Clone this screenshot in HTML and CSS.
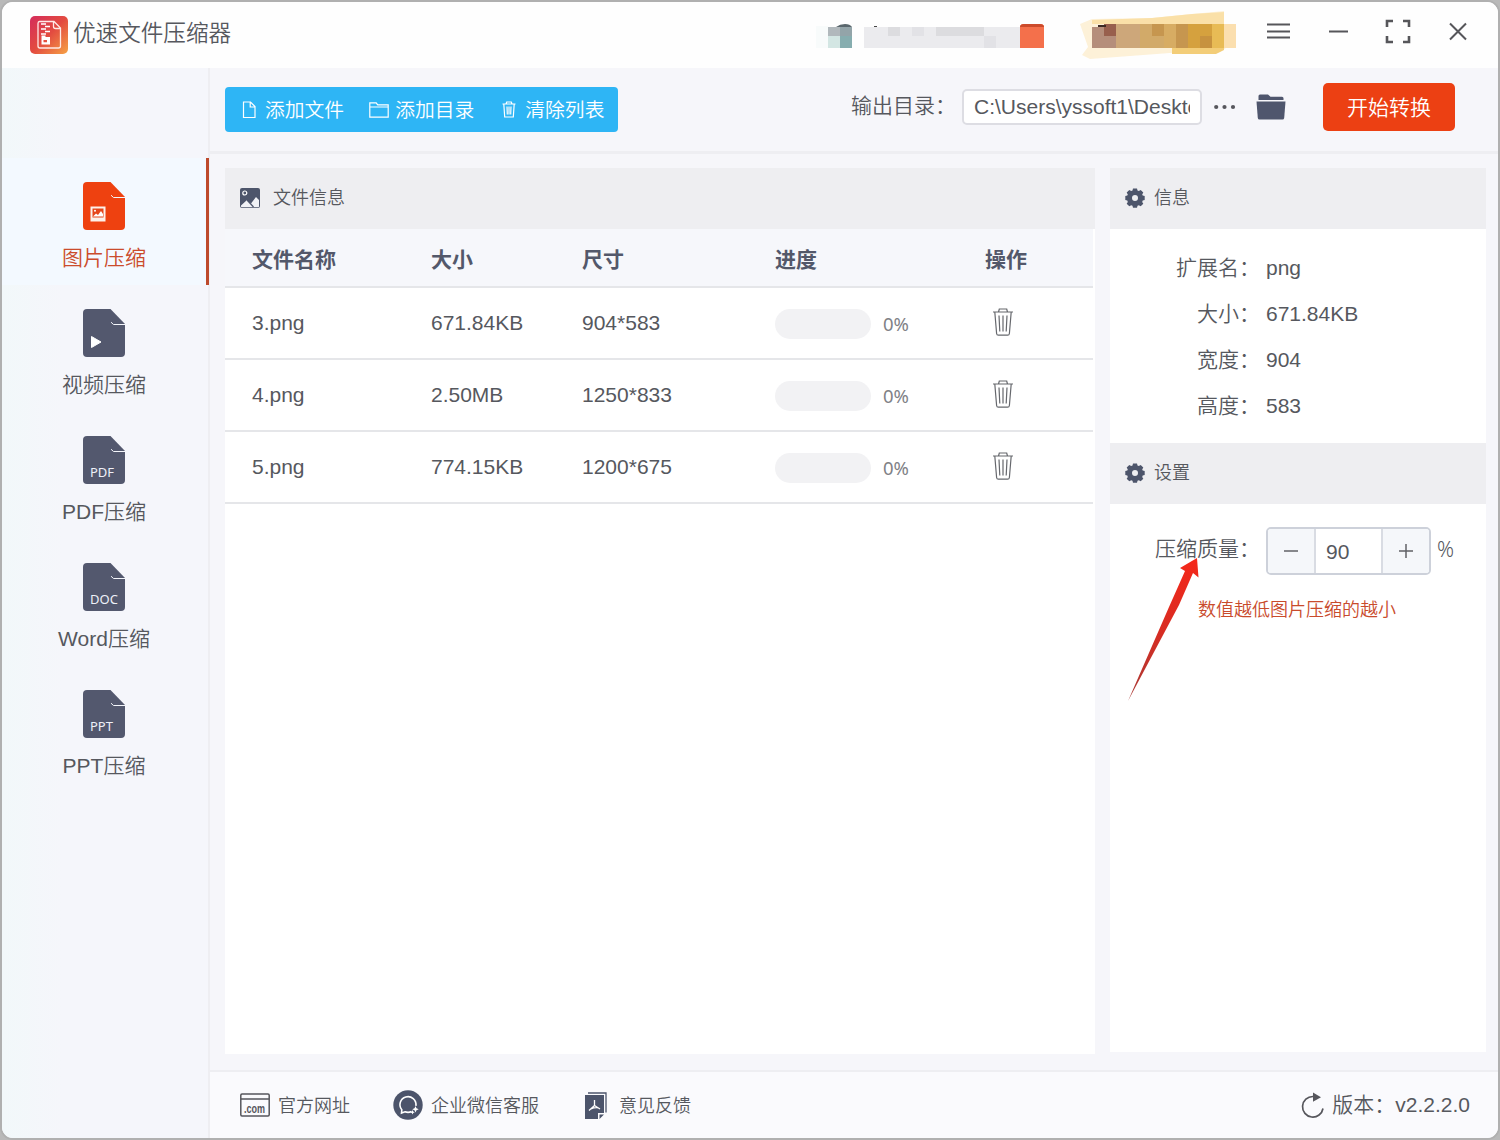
FILE: index.html
```html
<!DOCTYPE html>
<html lang="zh-CN">
<head>
  <meta charset="UTF-8">
  <meta name="viewport" content="width=device-width, initial-scale=1.0">
  <title>优速文件压缩器</title>
  <link rel="stylesheet" href="styles.css">
</head>
<body>
  <!-- Shared icons -->
  <svg class="sprite" width="0" height="0">
    <symbol id="i-file" viewBox="0 0 42 48">
      <path d="M4 0h23.500L42 15V44a4 4 0 0 1-4 4H4a4 4 0 0 1-4-4V4a4 4 0 0 1 4-4z" fill="currentColor"/>
      <path d="M28 13.200l2.500 2.300H42" fill="none" stroke="#f4f6fb" stroke-width="1"/>
    </symbol>
    <symbol id="i-trash" viewBox="0 0 20 28">
      <path d="M0 4h20M5.500 4l.8-3h7.400l.8 3M1.800 4l1.800 21.500q.2 1.700 1.800 1.700h9.200q1.600 0 1.800-1.700L18.200 4" fill="none" stroke="currentColor" stroke-width="1.200"/>
      <path d="M6 7.500l.8 16M10 7.500v16M14 7.500l-.8 16" fill="none" stroke="currentColor" stroke-width="1.200"/>
    </symbol>
    <symbol id="i-gear" viewBox="0 0 20 20">
      <path fill="currentColor" fill-rule="evenodd" d="M7.500 2.500L8 .5h4l.5 2 1.300.6L15.700 2l2.600 2.600-1.100 1.800.5 1.200 2 .5v4l-2 .5-.5 1.300 1.100 1.800-2.600 2.600-1.900-1.100-1.300.5-.5 2H8l-.5-2-1.300-.5-1.900 1.100-2.600-2.600 1.100-1.800-.5-1.300-2-.5v-4l2-.5.500-1.200L1.700 4.600 4.300 2l1.900 1.100zM10 7a3 3 0 1 0 0 6 3 3 0 0 0 0-6z"/>
    </symbol>
  </svg>

  <div class="window">
    <header class="titlebar">
      <svg class="logo" width="38" height="38" viewBox="0 0 38 38">
        <defs>
          <linearGradient id="logoFill" x1="0" y1="0" x2="1" y2="1">
            <stop offset="0" stop-color="#d42c5c"/>
            <stop offset=".5" stop-color="#e34b40"/>
            <stop offset="1" stop-color="#f6a245"/>
          </linearGradient>
        </defs>
        <rect width="38" height="38" rx="5" fill="url(#logoFill)"/>
        <path d="M9.500 5.500h14.500l6.500 6.500v18q0 2-2 2H10q-2 0-2-2V7.500q0-2 1.500-2zM23.500 6v4.500q0 2 2 2H30" fill="none" stroke="#ffe9e6" stroke-width="1.300"/>
        <path d="M11 8h5M15 10.500h5M11 13h5M15 15.500h5M11 18h5" stroke="#fff" stroke-width="1.500"/>
        <path fill="#fff" fill-rule="evenodd" d="M11.500 19.500h4v1.500h4.500v7.500h-8.500zM13.500 24v2.200h3.500V24z"/>
      </svg>
      <h1>优速文件压缩器</h1>

      <svg class="account" width="432" height="50" viewBox="810 10 432 50">
        <path d="M816 26h12v22h-12z" fill="#f8fbfb"/>
        <path d="M828 27h12v9h-12z" fill="#b1b8bc"/>
        <path d="M828 36h12v12h-12z" fill="#d3e6e3"/>
        <path d="M840 27h12v9h-12z" fill="#93a4a9"/>
        <path d="M840 36h12v12h-12z" fill="#86adaf"/>
        <path d="M836 27q4-3 9-3 5 0 7 3z" fill="#59666c"/>
        <path d="M864 27h156v21H864z" fill="#ebebee"/>
        <path d="M888 27h12v9h-12zM936 27h48v9h-48z" fill="#dcdcdf"/>
        <path d="M912 27h12v9h-12zM984 36h12v12h-12z" fill="#e2e2e6"/>
        <path d="M874 26h3v1h-3z" fill="#444"/>
        <path d="M1020 27q0-3 4-3h16q4 0 4 3v21h-24z" fill="#f4704b"/>
        <path d="M1020 27q0-3 4-3h16q4 0 4 3z" fill="#cc4b2b"/>
        <path d="M1080 24l12-5 60-1 40-4 32-3v16l12-2v23h-10l-8 5-48 0-80 6-8-4 6-8z" fill="#fdf1d8"/>
        <path d="M1092 20l60-2 40-4 32-2v12H1092z" fill="#fae0a8"/>
        <path d="M1172 48h52v2l-8 4h-44z" fill="#f3cd78"/>
        <path d="M1092 27h24v21h-24z" fill="#b58e7b"/>
        <path d="M1104 24h12v12h-12z" fill="#985f4d"/>
        <path d="M1098 25h8v2h-8z" fill="#3c2923"/>
        <path d="M1116 24h24v24h-24z" fill="#cda77a"/>
        <path d="M1140 24h24v24h-24z" fill="#d2aa69"/>
        <path d="M1152 24h12v12h-12zM1176 24h12v24h-12z" fill="#c6964f"/>
        <path d="M1164 24h12v24h-12z" fill="#d7ac63"/>
        <path d="M1188 24h24v24h-24z" fill="#d5a13e"/>
        <path d="M1200 36h12v12h-12z" fill="#c7923f"/>
        <path d="M1212 24h12v24h-12z" fill="#e8bb55"/>
        <path d="M1224 24h12v24h-12z" fill="#fbdfaf"/>
      </svg>

      <svg class="controls" width="202" height="26" viewBox="0 0 202 26" fill="none" stroke="#56565a" stroke-width="2">
        <path d="M1 6.500h23M1 13.500h23M1 19.500h23"/>
        <path d="M63 13.500h19"/>
        <path d="M121 9V3h6M137 3h6v6M143 18v6h-6M127 24h-6v-6" stroke-width="2.600"/>
        <path d="M184 5.500l16 16M200 5.500l-16 16"/>
      </svg>
    </header>

    <div class="main">
      <nav class="sidebar">
        <a class="nav-item active">
          <span class="nav-icon">
            <svg width="42" height="48"><use href="#i-file"/></svg>
            <svg class="nav-mark" width="16" height="16" viewBox="0 0 16 16">
              <path d="M.5.5h15v15H.5z" fill="#fdf1ea"/>
              <path d="M2.500 2.500h11v9h-11z" fill="#e5461b"/>
              <path d="M3 10.500l3-3 2 1.500 3-4 2 3v2.500z" fill="#fff"/>
              <circle cx="5" cy="4.800" r="1" fill="#fff"/>
            </svg>
          </span>
          <span>图片压缩</span>
        </a>
        <a class="nav-item">
          <span class="nav-icon">
            <svg width="42" height="48"><use href="#i-file"/></svg>
            <svg class="nav-mark" width="14" height="14" viewBox="0 0 14 14"><path d="M1.500 1.500l9.500 5.500-9.500 5.500z" fill="#fff" stroke="#fff" stroke-linejoin="round"/></svg>
          </span>
          <span>视频压缩</span>
        </a>
        <a class="nav-item">
          <span class="nav-icon"><svg width="42" height="48"><use href="#i-file"/></svg><b>PDF</b></span>
          <span>PDF压缩</span>
        </a>
        <a class="nav-item">
          <span class="nav-icon"><svg width="42" height="48"><use href="#i-file"/></svg><b>DOC</b></span>
          <span>Word压缩</span>
        </a>
        <a class="nav-item">
          <span class="nav-icon"><svg width="42" height="48"><use href="#i-file"/></svg><b>PPT</b></span>
          <span>PPT压缩</span>
        </a>
      </nav>

      <div class="workspace">
        <div class="toolbar">
          <div class="btn-group">
            <button>
              <svg width="14" height="18" viewBox="0 0 14 18" fill="none" stroke="currentColor" stroke-width="1.200"><path d="M1.500 1h7L13 5.500V16.500H1.500zM8.200 1v5H13"/></svg>
              添加文件
            </button>
            <button>
              <svg width="20" height="16" viewBox="0 0 20 16" fill="none" stroke="currentColor" stroke-width="1.200"><path d="M.8 15.200V.8h6.400l1.500 2h10.500v12.400zM.8 5h18.400"/></svg>
              添加目录
            </button>
            <button>
              <svg width="14" height="17" viewBox="0 0 14 17" fill="none" stroke="currentColor" stroke-width="1.200"><path d="M.5 3h13M4 3l.7-2h4.600L10 3M1.800 3l.9 13h8.600l.9-13M5 5.500l.3 8M7 5.500v8M9 5.500l-.3 8"/></svg>
              清除列表
            </button>
          </div>

          <div class="output">
            <label for="outDir">输出目录：</label>
            <input id="outDir" type="text" value="C:\Users\yssoft1\Desktop">
            <svg class="dots" width="22" height="6" viewBox="0 0 22 6" fill="#56565c"><circle cx="2.200" cy="3" r="2.100"/><circle cx="10.500" cy="3" r="2.100"/><circle cx="19" cy="3" r="2.100"/></svg>
            <svg class="folder" width="30" height="26" viewBox="0 0 30 26" fill="#4f566d"><path d="M2.500 6V2q0-1.500 1.500-1.500h8l2.500 2.200H26q1.500 0 1.500 1.500V6z"/><path d="M.5 7.500h29L28.200 24q-.2 1.500-1.700 1.500h-23Q2 25.500 1.800 24z"/></svg>
            <button class="start">开始转换</button>
          </div>
        </div>

        <div class="content">
          <section class="files">
            <div class="panel-head">
              <svg width="20" height="20" viewBox="0 0 20 20"><rect width="20" height="20" rx="2" fill="#4d556b"/><circle cx="4.800" cy="5" r="2" fill="none" stroke="#fff" stroke-width="1.200"/><path d="M1 17.500l6-5.500 4 3.500L16 9l3 3v6.500q0 .7-.7.700H1.700q-.7 0-.7-.7z" fill="#f1f2f6"/><path d="M7 12l6.500 7" stroke="#4d556b" stroke-width="1.200"/></svg>
              <span>文件信息</span>
            </div>
            <div class="row head">
              <span>文件名称</span><span>大小</span><span>尺寸</span><span>进度</span><span>操作</span>
            </div>
            <div class="row">
              <span>3.png</span><span>671.84KB</span><span>904*583</span>
              <span class="progress"><i></i><em>0%</em></span>
              <span class="action"><svg width="20" height="28"><use href="#i-trash"/></svg></span>
            </div>
            <div class="row">
              <span>4.png</span><span>2.50MB</span><span>1250*833</span>
              <span class="progress"><i></i><em>0%</em></span>
              <span class="action"><svg width="20" height="28"><use href="#i-trash"/></svg></span>
            </div>
            <div class="row">
              <span>5.png</span><span>774.15KB</span><span>1200*675</span>
              <span class="progress"><i></i><em>0%</em></span>
              <span class="action"><svg width="20" height="28"><use href="#i-trash"/></svg></span>
            </div>
          </section>

          <aside class="details">
            <div class="panel-head">
              <svg width="20" height="20"><use href="#i-gear"/></svg>
              <span>信息</span>
            </div>
            <dl class="info">
              <dt>扩展名：</dt><dd>png</dd>
              <dt>大小：</dt><dd>671.84KB</dd>
              <dt>宽度：</dt><dd>904</dd>
              <dt>高度：</dt><dd>583</dd>
            </dl>
            <div class="panel-head">
              <svg width="20" height="20"><use href="#i-gear"/></svg>
              <span>设置</span>
            </div>
            <div class="settings">
              <div class="quality">
                <span class="quality-label">压缩质量：</span>
                <div class="stepper">
                  <button><svg width="14" height="14"><path d="M0 7h14" stroke="#606266" stroke-width="1.500"/></svg></button>
                  <span>90</span>
                  <button><svg width="14" height="14"><path d="M0 7h14M7 0v14" stroke="#606266" stroke-width="1.500"/></svg></button>
                </div>
                <span class="percent">%</span>
              </div>
              <p class="hint">数值越低图片压缩的越小</p>
              <svg class="arrow" width="74" height="146" viewBox="1126 557 74 146">
                <defs>
                  <linearGradient id="arrowFill" x1="0" y1="1" x2="0" y2="0">
                    <stop offset="0" stop-color="#a83a35"/>
                    <stop offset=".5" stop-color="#d92c22"/>
                    <stop offset="1" stop-color="#f5281a"/>
                  </linearGradient>
                </defs>
                <path d="M1197 558l1.500 19.500-5.500-4.500-14 32-51 96 41-94 16-36-5-3z" fill="url(#arrowFill)"/>
              </svg>
            </div>
          </aside>
        </div>

        <footer class="footer">
          <a>
            <svg width="30" height="24" viewBox="0 0 30 24"><path d="M2 1h26q1.200 0 1.200 1.200v19.600q0 1.200-1.200 1.200H2q-1.200 0-1.200-1.200V2.200Q.8 1 2 1zM1 6h28" fill="none" stroke="#56565c" stroke-width="1.500"/><text x="4" y="20" class="dotcom" textLength="21" lengthAdjust="spacingAndGlyphs">.com</text></svg>
            <span>官方网址</span>
          </a>
          <a>
            <svg width="30" height="30" viewBox="0 0 30 30"><circle cx="15" cy="15" r="14.700" fill="#4c546b"/><path d="M18.500 21.500Q15.500 23 12 21.800l-3.500 1.200.3-3.200a8 8 0 1 1 14.100-4" fill="none" stroke="#fff" stroke-width="1.600"/><path d="M22.500 16l1 2.200 2.200 1-2.200 1-1 2.200-1-2.200-2.200-1 2.200-1zM19.500 20l.7 1.500 1.500.7-1.500.7-.7 1.500-.7-1.500-1.500-.7 1.500-.7z" fill="#fff"/></svg>
            <span>企业微信客服</span>
          </a>
          <a>
            <svg width="22" height="27" viewBox="0 0 22 27"><path d="M3 1h18v19.500" fill="none" stroke="#4c546b" stroke-width="1.300"/><path d="M0 3h19v18h-6v6H0zM14.500 22.500H19L14.500 27z" fill="#4c546b"/><path d="M9.500 8v5.500L4 18.500M9.500 13.500l5.500 3.500M6 16.800q3.500-1.500 7.500-1" fill="none" stroke="#fff" stroke-width="1.300"/></svg>
            <span>意见反馈</span>
          </a>
          <div class="version">
            <svg width="24" height="27" viewBox="0 0 24 27"><path d="M12 4.500a10.300 10.300 0 1 0 10 12" fill="none" stroke="#56565c" stroke-width="1.700"/><path d="M12 .5l8 4.800-8 4.500z" fill="#56565c"/></svg>
            <span>版本：v2.2.2.0</span>
          </div>
        </footer>
      </div>
    </div>
  </div>
</body>
</html>
```
FILE: styles.css
```css
* {
  box-sizing: border-box;
}
html, body {
  margin: 0;
  height: 100%;
  overflow: hidden;
}
body {
  background: #b9b9b9;
  font-family: "Liberation Sans", "Noto Sans CJK SC", sans-serif;
  font-size: 21px;
  font-weight: 350;
  color: #56585e;
}
svg {
  display: block;
  flex-shrink: 0;
}
button {
  font: inherit;
  border: 0;
  padding: 0;
}
.sprite {
  position: absolute;
}
.window {
  width: 1500px;
  height: 1140px;
  border: 2px solid #b0b0b0;
  border-radius: 13px;
  background: #f6f6fa;
  display: flex;
  flex-direction: column;
  overflow: hidden;
}

/* Title bar */
.titlebar {
  height: 66px;
  flex-shrink: 0;
  background: #fefefe;
  display: flex;
  align-items: flex-start;
  padding: 14px 30px 0 28px;
}
.titlebar h1 {
  margin: 2px 0 0 5px;
  font-size: 22.600px;
  font-weight: inherit;
  line-height: 32px;
}
.account {
  margin: -6px 24px 0 auto;
}
.controls {
  margin-top: 2px;
}

.main {
  flex: 1;
  display: flex;
  min-height: 0;
}

/* Left navigation */
.sidebar {
  width: 208px;
  border-right: 2px solid #eeeef2;
  padding-top: 90px;
  background: linear-gradient(90deg, #f2f8fa, #f5f6fb 60px);
}
.nav-item {
  height: 127px;
  padding: 24px 2px 0 0;
  display: flex;
  flex-direction: column;
  align-items: center;
  line-height: 30px;
}
.nav-item.active {
  background: #f3f9ff;
  border-right: 3px solid #bd4a2c;
  padding-right: 0;
  margin-right: -1px;
  color: #cb4c2c;
}
.nav-icon {
  position: relative;
  color: #53586e;
  margin-bottom: 13px;
}
.active .nav-icon {
  color: #ee4110;
}
.nav-mark {
  position: absolute;
  left: 7px;
  bottom: 8px;
}
.nav-icon b {
  position: absolute;
  left: 7px;
  bottom: 3px;
  font: 13px/18px "Noto Sans", sans-serif;
  color: #eef0f8;
}

.workspace {
  flex: 1;
  min-width: 0;
  display: flex;
  flex-direction: column;
}

/* Toolbar */
.toolbar {
  height: 86px;
  border-bottom: 3px solid #eeeef2;
  display: flex;
  align-items: flex-start;
  justify-content: space-between;
  padding: 15px 43px 0 15px;
}
.btn-group {
  width: 393px;
  height: 45px;
  margin-top: 4px;
  padding-left: 17px;
  border-radius: 4px;
  background: #2eb5f5;
  display: flex;
  align-items: center;
}
.btn-group button {
  display: flex;
  align-items: center;
  gap: 9px;
  background: none;
  color: #fff;
  font-size: 19.800px;
  line-height: 30px;
}
.btn-group button:nth-child(2) {
  gap: 6px;
  margin: 0 28px 0 25px;
}
.output {
  display: flex;
  align-items: center;
}
.output label {
  width: 111px;
  margin-top: -7px;
}
.output input {
  width: 240px;
  height: 36px;
  padding: 0 10px;
  border: 2px solid #dddde3;
  border-radius: 5px;
  background: #fff;
  font: inherit;
  color: inherit;
}
.dots {
  margin: 0 20px 0 12px;
}
.start {
  width: 132px;
  height: 48px;
  margin-left: 37px;
  padding-bottom: 3px;
  border-radius: 5px;
  background: #ec4013;
  color: #fff;
}

/* Panels */
.content {
  flex: 1;
  display: flex;
  gap: 14px;
  padding: 14px 12px 16px 15px;
}
.files {
  width: 871px;
  background: #fff;
  border-right: 1px solid #f6f6fa;
}
.details {
  width: 376px;
  height: 884px;
  background: #fff;
}
.panel-head {
  height: 61px;
  padding: 0 15px 6px;
  display: flex;
  align-items: center;
  gap: 13px;
  background: #eeeef1;
  font-size: 18px;
}
.panel-head svg {
  margin-top: 5px;
  color: #4d556b;
}
.details .panel-head {
  gap: 9px;
}

/* File table */
.row {
  height: 72px;
  margin-right: 2px;
  padding-left: 27px;
  display: grid;
  grid-template-columns: 179px 151px 193px 210px 1fr;
  align-items: center;
  border-bottom: 2px solid #e5e6e9;
}
.row.head {
  height: 59px;
  background: #f6f7fb;
  font-weight: 700;
  color: #53586a;
}
.progress {
  display: flex;
  align-items: center;
  gap: 12px;
  padding-top: 2px;
}
.progress i {
  width: 96px;
  height: 30px;
  border-radius: 15px;
  background: #f2f2f4;
}
.progress em {
  padding-bottom: 2px;
  font: 18.500px "Noto Sans", sans-serif;
  color: #808186;
}
.action {
  padding: 0 0 2px 8px;
  color: #66686d;
}

/* File details */
.info {
  height: 214px;
  margin: 0;
  padding-top: 16px;
  display: grid;
  grid-template-columns: 150px 1fr;
  grid-auto-rows: 46px;
  column-gap: 6px;
  line-height: 46px;
}
.info dt {
  text-align: right;
}
.info dd {
  margin: 0;
}

/* Compression settings */
.settings {
  position: relative;
  padding-top: 23px;
}
.quality {
  display: flex;
}
.quality-label {
  width: 156px;
  padding-left: 45px;
  line-height: 44px;
}
.stepper {
  width: 165px;
  height: 48px;
  display: flex;
  border: 2px solid #cdd1da;
  border-radius: 5px;
  overflow: hidden;
  line-height: 46px;
}
.stepper button {
  width: 46px;
  background: #f5f7fa;
  display: flex;
  align-items: center;
  justify-content: center;
}
.stepper span {
  flex: 1;
  padding-left: 10px;
  border: solid #d9dce3;
  border-width: 0 2px;
}
.percent {
  padding-left: 6px;
  font: 300 21px/44px "Noto Sans", sans-serif;
}
.hint {
  margin: 21px 0 0 88px;
  font-size: 18px;
  line-height: 28px;
  color: #c94b2c;
}
/* Pointer lies over the quality label */
.arrow {
  position: absolute;
  left: 16px;
  top: 53px;
}

/* Footer */
.footer {
  height: 68px;
  flex-shrink: 0;
  border-top: 2px solid #eeeef2;
  background: #fafafd;
  display: flex;
  align-items: center;
  padding: 0 28px 0 30px;
  font-size: 18px;
}
.footer a {
  display: flex;
  align-items: center;
  gap: 8px;
  margin-right: 43px;
}
.footer a:nth-child(3) {
  gap: 12px;
  margin-left: 3px;
}
.footer span {
  margin-top: -2px;
}
.dotcom {
  font: bold 12px "Liberation Sans", sans-serif;
  fill: #56565c;
}
.version {
  display: flex;
  align-items: center;
  gap: 7px;
  margin-left: auto;
  font-size: 21px;
}
.version span {
  margin-top: -4px;
}
```
